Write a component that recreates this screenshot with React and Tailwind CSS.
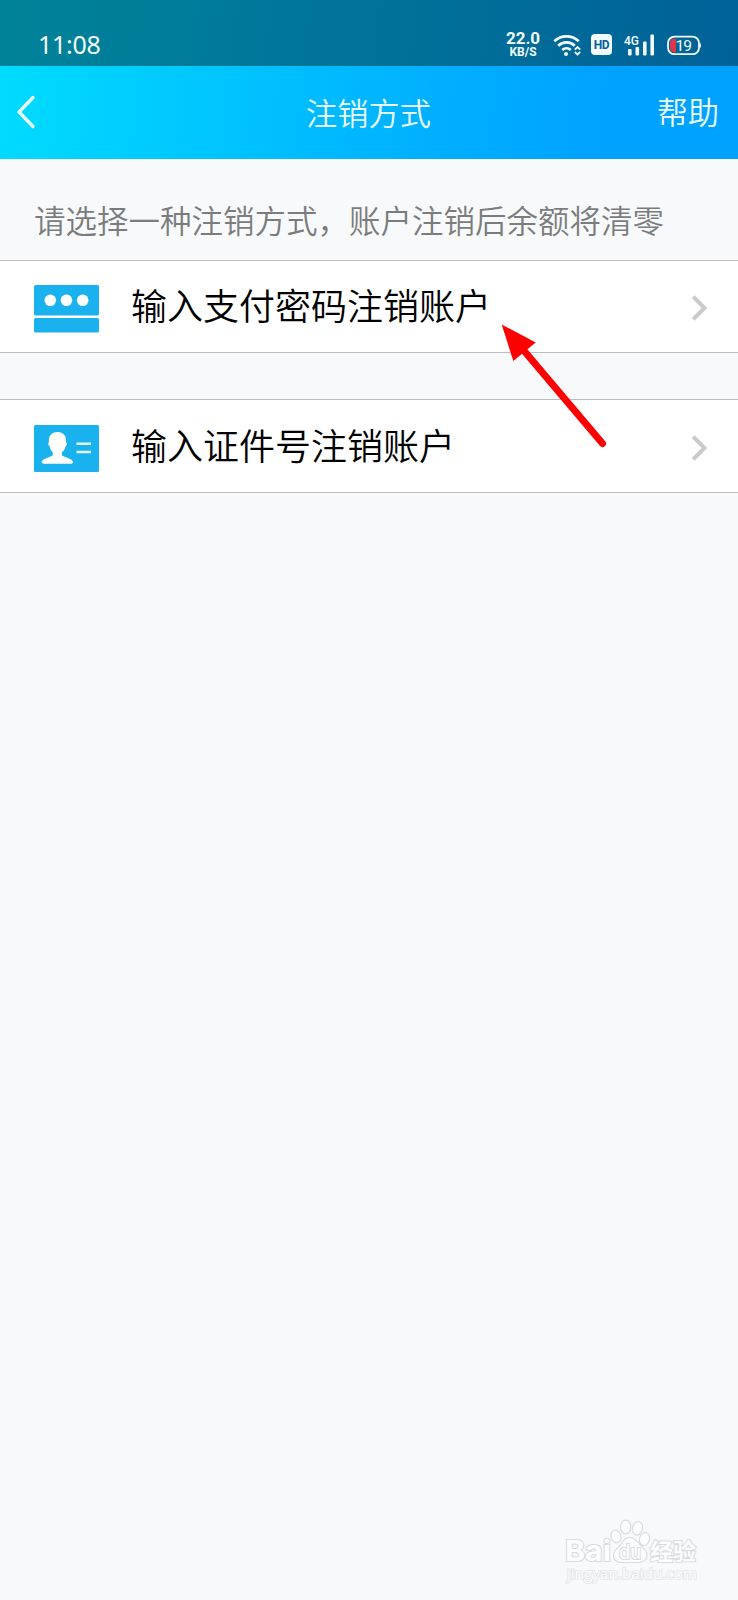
const CJK = "font-['Roboto','Noto_Sans_CJK_SC',sans-serif]";

function StatusBar() {
  return (
    <div className="flex h-[66px] items-end bg-[linear-gradient(97deg,#008399_0%,#00769a_40%,#006198_100%)] pl-[38px] pr-[36px] text-[#f2fbfd]">
      <span className="mb-[6px] font-['Noto_Sans',sans-serif] text-[25px] leading-[32px] tracking-[-0.3px]">11:08</span>
      <div className="mb-[8px] ml-auto flex items-center">
        <div className="flex w-[34px] flex-col items-center font-['Roboto',sans-serif] font-bold">
          <span className="text-[17px] leading-[14px]">22.0</span>
          <span className="mt-px text-[12px] leading-[12px]">KB/S</span>
        </div>
        <svg className="ml-[13px] h-[24px] w-[28px]" viewBox="0 0 28 24" fill="none" stroke="currentColor" strokeWidth="2.8">
          <path d="M1.3 8.2a18 18 0 0 1 24.4 0M5.2 12.7a12 12 0 0 1 16.6 0M9.3 17a6.3 6.3 0 0 1 8.4 0" />
          <circle cx="13" cy="21" r="2" fill="currentColor" stroke="none" />
          <path d="M21.8 16.6l2.7-2.5 2.7 2.5M21.8 19l2.7 2.5 2.7-2.5" strokeWidth="1.8" />
        </svg>
        <div className="ml-[10px] flex h-[21px] w-[21px] items-center justify-center rounded-[4px] bg-[#f2fbfd] font-['Roboto',sans-serif] text-[12px] font-bold leading-none tracking-[-0.3px] text-[#00639a]">
          <span className="inline-block scale-y-110">HD</span>
        </div>
        <svg className="ml-[12px] h-[24px] w-[32px]" viewBox="0 0 32 24" fill="currentColor">
          <text x="0" y="12" fontFamily="Roboto, sans-serif" fontSize="13.5" fontWeight="500" textLength="15" lengthAdjust="spacingAndGlyphs">4G</text>
          <rect x="4" y="16" width="3.6" height="6.5" rx="1" />
          <rect x="11.5" y="14" width="3.6" height="8.5" rx="1" />
          <rect x="19" y="8.5" width="3.6" height="14" rx="1" />
          <rect x="26.4" y="1.5" width="3.6" height="21" rx="1" />
        </svg>
        <svg className="ml-[10px] h-[24px] w-[36px]" viewBox="0 0 36 24" fill="none">
          <rect x="2" y="3.6" width="31" height="17.6" rx="6.5" stroke="currentColor" strokeWidth="1.8" />
          <path d="M34 9.5q2 3 0 6z" fill="currentColor" />
          <path d="M10 5.8v13.4H7.5Q4 18.5 4 15V10Q4 6.5 7.5 5.8z" fill="#e0364c" />
          <text x="9.5" y="18" fill="currentColor" fontFamily="Roboto, sans-serif" fontSize="15.5" textLength="16.5">19</text>
        </svg>
      </div>
    </div>
  );
}

function Header() {
  return (
    <header className={`${CJK} grid h-[93px] grid-cols-[1fr_auto_1fr] items-center bg-[linear-gradient(97deg,#00dcff_0%,#00c3ff_32%,#00b0ff_58%,#00a2ff_82%,#00a2ff_100%)] text-[#e9fbff]`}>
      <svg className="-mt-px ml-[16px] h-[36px] w-[20px]" viewBox="0 0 20 36" fill="none" stroke="currentColor" strokeWidth="3.4" strokeLinecap="round" strokeLinejoin="round">
        <path d="M17 3.5L3 18l14 14.5" />
      </svg>
      <h1 className="-ml-px mt-[5px] text-[31.2px] font-[350] leading-[46px]">注销方式</h1>
      <span className="mr-[19px] mt-[2px] justify-self-end text-[31px] font-[350] leading-[46px]">帮助</span>
    </header>
  );
}

function PasswordIcon() {
  return (
    <svg className="h-[48px] w-[65px]" viewBox="0 0 65 48">
      <rect width="65" height="30.5" rx="1.5" fill="#1ab2ee" />
      <rect y="33" width="65" height="14.5" rx="1.5" fill="#1ab2ee" />
      <g fill="#fff">
        <circle cx="16.3" cy="15.3" r="5.8" />
        <circle cx="32.5" cy="15.3" r="5.8" />
        <circle cx="48.7" cy="15.3" r="5.8" />
      </g>
    </svg>
  );
}

function IdCardIcon() {
  return (
    <svg className="h-[48px] w-[65px]" viewBox="0 0 65 48">
      <rect width="65" height="47" rx="1.5" fill="#1ab2ee" />
      <path d="M23.5 7C28.500 7 32 10.500 32 15v2c1.300 1 .9 4-.6 4.700-.5 2.500-1.800 4.300-3.400 5.600v3c1.500 1.800 10 3.200 11 6.500q.4 1.700-1.500 1.900H9.200q-1.900-.2-1.500-1.900c1-3.300 9.500-4.700 11-6.500v-3c-1.300-1.300-2.500-3.100-2.900-5.600-1.500-.7-1.900-3.700-.9-4.700v-2c0-4.500 3.600-8 8.600-8z" fill="#fff" />
      <path d="M42.500 18.800h14.500M42.500 27h14.500" stroke="#e2f6fd" strokeWidth="2.5" />
    </svg>
  );
}

function Row({ icon, children }) {
  return (
    <div className={`${CJK} flex h-[93px] items-center border-y border-[#bcbec1] bg-white pl-[34px] pr-[31px] last:h-[94px] last:pt-px`}>
      <span className="mt-[4px]">{icon}</span>
      <span className="ml-[32px] mt-[2px] text-[36px] font-[350] leading-[52px] text-black">{children}</span>
      <svg className="ml-auto mt-[3px] h-[26px] w-[15px]" viewBox="0 0 15 26" fill="none" stroke="#cacaca" strokeWidth="4">
        <path d="M1.2 1.7L12.5 13 1.2 24.3" />
      </svg>
    </div>
  );
}

function Arrow() {
  return (
    <svg className="pointer-events-none absolute left-[496px] top-[320px] h-[132px] w-[116px]" viewBox="496 320 116 132">
      <path d="M520 346L602.5 443.5" stroke="#fe0000" strokeWidth="7" strokeLinecap="round" />
      <path d="M501.7 324.5L535.7 342.5L513.3 361z" fill="#fe0000" />
    </svg>
  );
}

function Watermark() {
  return (
    <svg className="absolute bottom-[12px] right-[34px] h-[72px] w-[140px]" viewBox="564 1516 140 72" fill="#fdfdfe" stroke="#d9dbde" strokeWidth="1.2">
      <ellipse cx="616" cy="1536.5" rx="5" ry="6.5" transform="rotate(-15 616 1536.5)" />
      <ellipse cx="625.7" cy="1527" rx="5.2" ry="6.8" />
      <ellipse cx="637.5" cy="1528.3" rx="5" ry="6.8" transform="rotate(12 637.5 1528.3)" />
      <ellipse cx="644.5" cy="1539" rx="5" ry="6.5" transform="rotate(15 644.5 1539)" />
      <path d="M629.500 1537.500c6 0 8 4.500 11.500 8 3.500 3 6.500 6 6 10-.5 5-4.500 7-9 7h-17c-4.500 0-7.500-3-7.500-7 0-4.500 3.500-7 6.500-10 3-3.500 4-8 9.500-8z" />
      <g paintOrder="stroke" strokeWidth="2">
        <text x="565" y="1561" fontFamily="Inter, sans-serif" fontWeight="700" fontSize="29" textLength="46" lengthAdjust="spacingAndGlyphs">Bai</text>
        <text x="619" y="1558.5" fontFamily="Inter, sans-serif" fontWeight="500" fontSize="20" textLength="22" lengthAdjust="spacingAndGlyphs">du</text>
        <text x="650" y="1559.5" fontFamily="'Noto Sans CJK SC', sans-serif" fontWeight="700" fontSize="23" textLength="46" lengthAdjust="spacingAndGlyphs">经验</text>
        <text x="567" y="1579" fontFamily="'Open Sans', sans-serif" fontSize="14" textLength="130" lengthAdjust="spacingAndGlyphs" strokeWidth="1.5" stroke="#e2e4e7">jingyan.baidu.com</text>
      </g>
    </svg>
  );
}

export default function App() {
  return (
    <div className="relative h-[1600px] w-[738px] overflow-hidden bg-[#f7f9fb]">
      <StatusBar />
      <Header />
      <main>
        <p className={`${CJK} h-[101px] whitespace-nowrap pl-[34px] pt-[41px] text-[31.5px] font-[350] leading-[46px] text-[#7b7c7d]`}>
          请选择一种注销方式，账户注销后余额将清零
        </p>
        <div className="flex flex-col gap-[46px]">
          <Row icon={<PasswordIcon />}>输入支付密码注销账户</Row>
          <Row icon={<IdCardIcon />}>输入证件号注销账户</Row>
        </div>
      </main>
      <Arrow />
      <Watermark />
    </div>
  );
}
